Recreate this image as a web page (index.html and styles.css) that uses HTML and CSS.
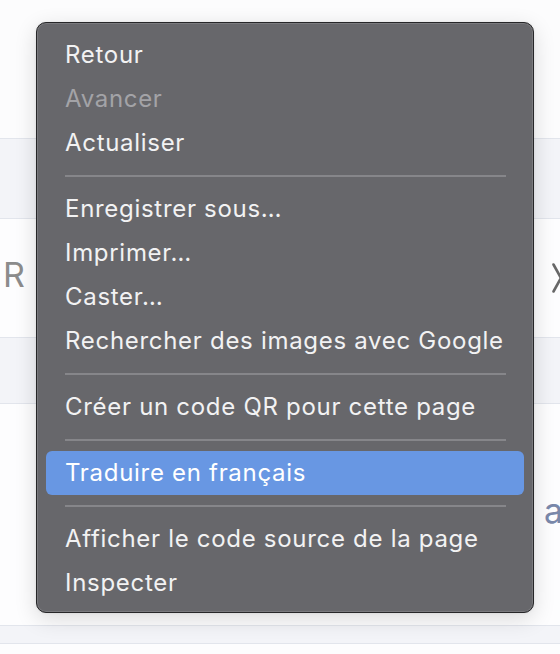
FILE: index.html
```html
<!DOCTYPE html>
<html lang="fr">
<head>
<meta charset="utf-8">
<link rel="stylesheet" href="styles.css">
</head>
<body>
<div class="page">
  <div class="row row-top"></div>
  <div class="row row-band row-a"></div>
  <div class="row row-mid">
    <span class="peek-r">R</span>
    <span class="peek-x"><svg width="18" height="30" viewBox="0 0 18 30"><path d="M1.5 1.5 L16.5 28.5 M1.5 28.5 L16.5 1.5" stroke="#686868" stroke-width="2.6" fill="none" stroke-linecap="round"/></svg></span>
  </div>
  <div class="row row-band row-b"></div>
  <div class="row row-low"><span class="peek-a">a</span></div>
  <div class="row row-band row-c"></div>
</div>

<div class="menu">
  <div class="item">Retour</div>
  <div class="item disabled">Avancer</div>
  <div class="item">Actualiser</div>
  <div class="sep"></div>
  <div class="item">Enregistrer sous…</div>
  <div class="item">Imprimer…</div>
  <div class="item">Caster…</div>
  <div class="item">Rechercher des images avec Google</div>
  <div class="sep"></div>
  <div class="item">Créer un code QR pour cette page</div>
  <div class="sep"></div>
  <div class="item active">Traduire en français</div>
  <div class="sep"></div>
  <div class="item">Afficher le code source de la page</div>
  <div class="item">Inspecter</div>
</div>
</body>
</html>
```

FILE: styles.css
```css
* { box-sizing: border-box; }
html, body {
  margin: 0;
  padding: 0;
  width: 560px;
  height: 654px;
  overflow: hidden;
  background: #ffffff;
  font-family: Inter, "Noto Sans", "DejaVu Sans", sans-serif;
}
.page {
  display: flex;
  flex-direction: column;
  width: 560px;
  height: 654px;
  background: #fdfdfe;
  overflow: hidden;
}
.row { flex: none; position: relative; }
.row-top { height: 138px; background: #fcfcfd; }
.row-band {
  background: #f3f4f8;
  border-top: 1px solid #e2e5ec;
  border-bottom: 1px solid #e2e5ec;
}
.row-a { height: 81px; }
.row-mid { height: 118px; background: #fdfdfe; }
.row-b { height: 67px; }
.row-low { height: 221px; background: #fdfdfe; }
.row-c { height: 19px; }

.peek-r {
  position: absolute;
  left: 3px;
  top: 39px;
  font-size: 34px;
  line-height: 1;
  color: #8c8c8c;
  font-weight: 400;
}
.peek-x {
  position: absolute;
  left: 552px;
  top: 44px;
  width: 18px;
  height: 30px;
}
.peek-x svg { display: block; }
.peek-a {
  position: absolute;
  left: 544px;
  top: 90px;
  font-size: 34px;
  line-height: 1;
  color: #7a88aa;
}

.menu {
  position: absolute;
  left: 36px;
  top: 22px;
  width: 498px;
  height: 591px;
  background: #67676b;
  border: 1px solid #262628;
  border-radius: 10px;
  box-shadow: inset 0 0 0 1px rgba(255,255,255,0.13), 0 6px 22px rgba(0,0,0,0.14), 0 0 3px rgba(0,0,0,0.08);
  padding: 10px 9px 7px 9px;
  display: flex;
  flex-direction: column;
}
.item {
  height: 44px;
  line-height: 44px;
  padding-left: 19px;
  font-size: 24px;
  color: #f2f2f3;
  letter-spacing: 0.7px;
  white-space: nowrap;
  border-radius: 6px;
}
.item.disabled { color: #a3a3a7; }
.item.active { background: #6897e3; color: #ffffff; }
.sep {
  height: 22px;
  display: flex;
  align-items: center;
  padding: 0 18px 0 19px;
}
.sep::before {
  content: "";
  display: block;
  width: 100%;
  height: 2px;
  background: #86868a;
}
```
